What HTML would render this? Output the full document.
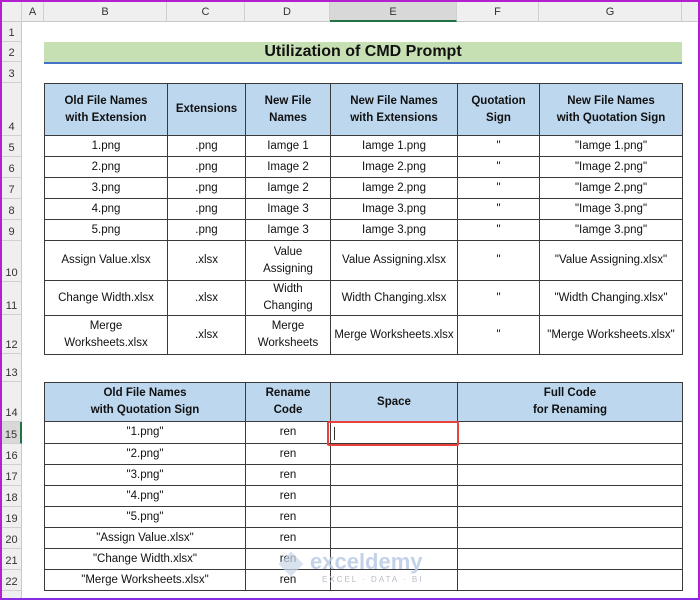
<!DOCTYPE html>
<html><head><style>
*{margin:0;padding:0;box-sizing:border-box}
body{width:700px;height:600px;overflow:hidden;background:#fff;font-family:"Liberation Sans",sans-serif;position:relative}
.frame{position:absolute;left:0;top:0;width:700px;height:600px;border:2px solid #b41fd0;border-bottom-color:#8a2be2;pointer-events:none;z-index:9}
.ch{position:absolute;top:2px;height:20px;background:#efefef;border-right:1px solid #d0d0d0;border-bottom:1px solid #c8c8c8;font-size:11px;color:#333;text-align:center;line-height:20px}
.rh{position:absolute;left:2px;width:20px;background:#efefef;border-bottom:1px solid #d0d0d0;border-right:1px solid #c8c8c8;font-size:11px;color:#333;text-align:center;display:flex;align-items:flex-end;justify-content:center;padding-bottom:2px}
table{position:absolute;border-collapse:collapse;table-layout:fixed;font-size:11.5px;color:#111}
td{border:1px solid #3a3a3a;text-align:center;vertical-align:middle;line-height:17px;padding:0 2px;overflow:hidden;white-space:nowrap}
th{border:1px solid #3a3a3a;background:#bdd7ee;font-weight:bold;font-size:11.5px;line-height:17px;text-align:center;vertical-align:middle}
</style></head><body>
<div class="frame"></div>
<div class="ch" style="left:2px;width:20px"></div>
<div class="ch" style="left:22px;width:22px">A</div>
<div class="ch" style="left:44px;width:123px">B</div>
<div class="ch" style="left:167px;width:78px">C</div>
<div class="ch" style="left:245px;width:85px">D</div>
<div class="ch" style="left:330px;width:127px;background:#d8d8d8;border-bottom:2px solid #217346">E</div>
<div class="ch" style="left:457px;width:82px">F</div>
<div class="ch" style="left:539px;width:143px">G</div>
<div class="ch" style="left:682px;width:18px"></div>

<div class="rh" style="top:22px;height:20px">1</div>
<div class="rh" style="top:42px;height:20px">2</div>
<div class="rh" style="top:62px;height:21px">3</div>
<div class="rh" style="top:83px;height:53px">4</div>
<div class="rh" style="top:136px;height:21px">5</div>
<div class="rh" style="top:157px;height:21px">6</div>
<div class="rh" style="top:178px;height:21px">7</div>
<div class="rh" style="top:199px;height:21px">8</div>
<div class="rh" style="top:220px;height:21px">9</div>
<div class="rh" style="top:241px;height:41px">10</div>
<div class="rh" style="top:282px;height:33px">11</div>
<div class="rh" style="top:315px;height:39px">12</div>
<div class="rh" style="top:354px;height:28px">13</div>
<div class="rh" style="top:382px;height:40px">14</div>
<div class="rh" style="top:422px;height:22px;background:#d8d8d8;border-right:2px solid #217346">15</div>
<div class="rh" style="top:444px;height:21px">16</div>
<div class="rh" style="top:465px;height:21px">17</div>
<div class="rh" style="top:486px;height:21px">18</div>
<div class="rh" style="top:507px;height:21px">19</div>
<div class="rh" style="top:528px;height:21px">20</div>
<div class="rh" style="top:549px;height:21px">21</div>
<div class="rh" style="top:570px;height:21px">22</div>
<div class="rh" style="top:591px;height:9px"></div>

<div style="position:absolute;left:44px;top:42px;width:638px;height:20px;background:#c6e0b4;font-weight:bold;font-size:16px;text-align:center;line-height:20px;color:#111">Utilization of CMD Prompt</div>
<div style="position:absolute;left:44px;top:62px;width:638px;height:2px;background:#4472c4"></div>

<table style="left:44px;top:83px;width:638px">
<colgroup><col style="width:123px"><col style="width:78px"><col style="width:85px"><col style="width:127px"><col style="width:82px"><col style="width:143px"></colgroup>
<tr style="height:52px"><th>Old File Names<br>with Extension</th><th>Extensions</th><th>New File<br>Names</th><th>New File Names<br>with Extensions</th><th>Quotation<br>Sign</th><th>New File Names<br>with Quotation Sign</th></tr>
<tr style="height:21px"><td>1.png</td><td>.png</td><td>Iamge 1</td><td>Iamge 1.png</td><td>"</td><td>"Iamge 1.png"</td></tr>
<tr style="height:21px"><td>2.png</td><td>.png</td><td>Image 2</td><td>Image 2.png</td><td>"</td><td>"Image 2.png"</td></tr>
<tr style="height:21px"><td>3.png</td><td>.png</td><td>Iamge 2</td><td>Iamge 2.png</td><td>"</td><td>"Iamge 2.png"</td></tr>
<tr style="height:21px"><td>4.png</td><td>.png</td><td>Image 3</td><td>Image 3.png</td><td>"</td><td>"Image 3.png"</td></tr>
<tr style="height:21px"><td>5.png</td><td>.png</td><td>Iamge 3</td><td>Iamge 3.png</td><td>"</td><td>"Iamge 3.png"</td></tr>
<tr style="height:40px"><td>Assign Value.xlsx</td><td>.xlsx</td><td>Value<br>Assigning</td><td>Value Assigning.xlsx</td><td>"</td><td>"Value Assigning.xlsx"</td></tr>
<tr style="height:33px"><td>Change Width.xlsx</td><td>.xlsx</td><td>Width<br>Changing</td><td>Width Changing.xlsx</td><td>"</td><td>"Width Changing.xlsx"</td></tr>
<tr style="height:39px"><td>Merge<br>Worksheets.xlsx</td><td>.xlsx</td><td>Merge<br>Worksheets</td><td>Merge Worksheets.xlsx</td><td>"</td><td>"Merge Worksheets.xlsx"</td></tr>
</table>

<table style="left:44px;top:382px;width:638px">
<colgroup><col style="width:201px"><col style="width:85px"><col style="width:127px"><col style="width:225px"></colgroup>
<tr style="height:39px"><th>Old File Names<br>with Quotation Sign</th><th>Rename<br>Code</th><th>Space</th><th>Full Code<br>for Renaming</th></tr>
<tr style="height:22px"><td>"1.png"</td><td>ren</td><td></td><td></td></tr>
<tr style="height:21px"><td>"2.png"</td><td>ren</td><td></td><td></td></tr>
<tr style="height:21px"><td>"3.png"</td><td>ren</td><td></td><td></td></tr>
<tr style="height:21px"><td>"4.png"</td><td>ren</td><td></td><td></td></tr>
<tr style="height:21px"><td>"5.png"</td><td>ren</td><td></td><td></td></tr>
<tr style="height:21px"><td>"Assign Value.xlsx"</td><td>ren</td><td></td><td></td></tr>
<tr style="height:21px"><td>"Change Width.xlsx"</td><td>ren</td><td></td><td></td></tr>
<tr style="height:21px"><td>"Merge Worksheets.xlsx"</td><td>ren</td><td></td><td></td></tr>
</table>
<div style="position:absolute;left:327px;top:421px;width:132px;height:25px;border:2px solid #e8403a;border-radius:2px"></div>
<div style="position:absolute;left:334px;top:427px;width:1px;height:13px;background:#333"></div>

<div style="position:absolute;left:280px;top:553px;width:22px;height:22px;background:#c9d6e8;opacity:.7;transform:rotate(45deg) scale(.8)"></div>
<div style="position:absolute;left:310px;top:550px;font-size:22px;font-weight:bold;color:#b9cbe6;opacity:.85;line-height:24px">exceldemy</div>
<div style="position:absolute;left:322px;top:575px;font-size:8px;letter-spacing:2px;color:#b8bcc4;line-height:10px">EXCEL · DATA · BI</div>
</body></html>
